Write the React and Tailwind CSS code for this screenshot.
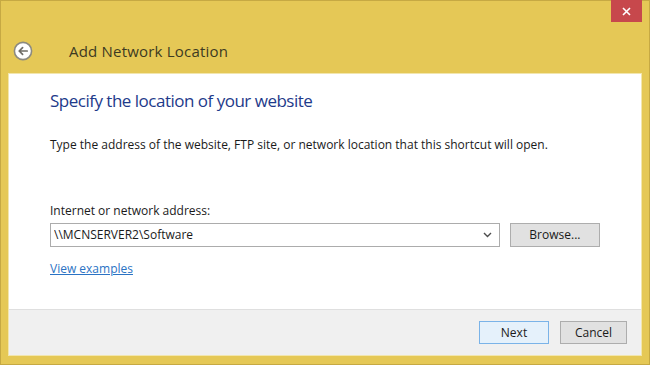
import { useState } from 'react';

const FONT = { fontFamily: '"Open Sans", "Noto Sans", sans-serif' };

function BackIcon() {
  return (
    <svg width="20" height="20" viewBox="0 0 20 20">
      <circle cx="10" cy="10" r="8.6" fill="#ffffff" stroke="#8c8a80" strokeWidth="1.6" />
      <path d="M14.2 10H6.2M9.6 6.6L6.2 10l3.4 3.4" fill="none" stroke="#6f6d66" strokeWidth="1.7" strokeLinecap="round" strokeLinejoin="round" />
    </svg>
  );
}

function CloseIcon() {
  return (
    <svg width="9" height="9" viewBox="0 0 9 9">
      <path d="M1 1l7 7M8 1L1 8" stroke="#ffffff" strokeWidth="1.6" />
    </svg>
  );
}

function Chevron() {
  return (
    <svg width="9" height="6" viewBox="0 0 9 6">
      <path d="M1 1l3.5 3.5L8 1" fill="none" stroke="#4d4d4d" strokeWidth="1.4" />
    </svg>
  );
}

export default function App() {
  const [address, setAddress] = useState('\\\\MCNSERVER2\\Software');

  return (
    <div className="w-[650px] h-[365px] bg-[#e5c856] border border-[#c6a943] flex flex-col px-[7px] pb-[8px] text-[#1a1a1a]" style={FONT}>
      {/* Title bar */}
      <div className="relative h-[72px] flex items-end pb-[12px]">
        <button className="absolute top-[-1px] right-0 w-[31px] h-[22px] bg-[#c7484c] flex items-center justify-center">
          <CloseIcon />
        </button>
        <div className="flex items-center gap-[36px] pl-[5px]">
          <BackIcon />
          <span className="text-[15px] leading-[20px] text-[#3d3a22] tracking-[0.2px]">Add Network Location</span>
        </div>
      </div>

      {/* Panel */}
      <div className="flex-1 bg-white border border-[#f2e6ae] flex flex-col">
        <div className="flex-1 px-[41px] pt-[15px] flex flex-col">
          <h1 className="text-[17px] leading-[24px] text-[#1e3a8a] tracking-[-0.5px]">Specify the location of your website</h1>
          <p className="mt-[24px] text-[12px] leading-[16px]">
            Type the address of the website, FTP site, or network location that this shortcut will open.
          </p>
          <label className="mt-[50px] text-[12px] leading-[16px]">Internet or network address:</label>
          <div className="mt-[4px] flex items-center gap-[10px]">
            <div className="w-[454px] h-[24px] border border-[#acacac] flex items-center pr-[7px]">
              <input
                value={address}
                onChange={(e) => setAddress(e.target.value)}
                className="flex-1 min-w-0 px-[3px] text-[12px] outline-none bg-transparent"
                style={FONT}
              />
              <Chevron />
            </div>
            <button className="w-[91px] h-[24px] bg-[#e1e1e1] border border-[#adadad] text-[12px]">Browse...</button>
          </div>
          <a className="mt-[14px] self-start text-[12px] leading-[16px] text-[#2b73c4] underline">View examples</a>
        </div>

        {/* Footer */}
        <div className="h-[46px] bg-[#f0f0f0] border-t border-[#dfdfdf] flex items-center justify-end gap-[11px] pr-[14px]">
          <button className="w-[70px] h-[23px] bg-[#e5f1fb] border border-[#7ab3e8] text-[12px]">Next</button>
          <button className="w-[67px] h-[23px] bg-[#e1e1e1] border border-[#adadad] text-[12px]">Cancel</button>
        </div>
      </div>
    </div>
  );
}
